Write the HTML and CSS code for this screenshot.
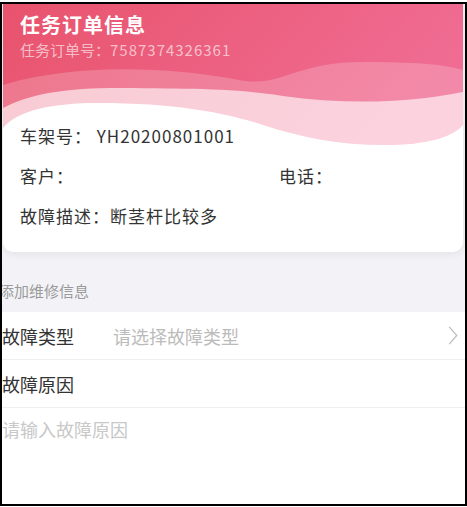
FILE: index.html
```html
<!DOCTYPE html>
<html lang="zh-CN">
<head>
<meta charset="UTF-8">
<meta name="viewport" content="width=device-width, initial-scale=1.0">
<title>任务订单信息</title>
<link rel="stylesheet" href="styles.css">
</head>
<body>
<div class="frame">
    <div class="card">
        <svg class="wave" viewBox="0 0 460 150" preserveAspectRatio="none">
            <defs>
                <linearGradient id="pink" x1="0" y1="0" x2="1" y2="0.3">
                    <stop offset="0" stop-color="#e8536c"/>
                    <stop offset="1" stop-color="#f06c93"/>
                </linearGradient>
            </defs>
            <rect width="460" height="150" fill="url(#pink)"/>
            <path d="M0,81 C70,60 160,62 236,76 C280,84 290,58 360,58 C410,58 440,60 460,66 V150 H0 Z" fill="rgba(255,255,255,0.2)"/>
            <path d="M0,104 C30,88 70,83 130,84 C190,85 230,84 280,92 C340,100 400,100 460,88 V150 H0 Z" fill="rgba(255,255,255,0.62)"/>
            <path d="M0,124 C15,106 50,99 95,99 C170,99 220,108 260,121 C300,134 340,142 390,141 C430,140 452,131 460,121 V150 H0 Z" fill="#fff"/>
        </svg>
        <div class="head">
            <h1 class="title">任务订单信息</h1>
            <p class="sub">任务订单号：<span class="num-sm">7587374326361</span></p>
        </div>
        <div class="info">
            <div class="row">车架号： <span class="num">YH20200801001</span></div>
            <div class="row split">
                <span>客户：</span>
                <span class="phone">电话：</span>
            </div>
            <div class="row">故障描述：断茎杆比较多</div>
        </div>
    </div>

    <div class="section">添加维修信息</div>

    <div class="field">
        <span class="label">故障类型</span>
        <span class="hint">请选择故障类型</span>
        <svg class="arrow" viewBox="0 0 10 20"><polyline points="1,1 9,10 1,19" fill="none" stroke="#bdbdbd" stroke-width="1.3"/></svg>
    </div>
    <div class="field">
        <span class="label">故障原因</span>
    </div>
    <div class="reason">请输入故障原因</div>
</div>
</body>
</html>
```

FILE: styles.css
```css
body {
    margin: 0;
    font-family: "Noto Sans CJK SC", "Noto Sans", sans-serif;
    background: #fff;
}

.frame {
    margin-top: 2px;
    height: 504px;
    box-sizing: border-box;
    border: 2px solid #000;
    overflow: hidden;
    background: #f3f3f7;
}

.card {
    position: relative;
    margin: 0 2px 0 1px;
    background: #fff;
    border-radius: 0 0 10px 10px;
    box-shadow: 0 2px 8px rgba(0, 0, 0, 0.07);
    overflow: hidden;
}

.wave {
    position: absolute;
    top: 0;
    left: 0;
    width: 100%;
    height: 150px;
}

.head, .info {
    position: relative;
}

.head {
    padding: 8px 0 0 17px;
}

.title {
    margin: 0;
    font-size: 20px;
    line-height: 26px;
    font-weight: bold;
    letter-spacing: 1px;
    color: #fff;
}

.sub {
    margin: 2px 0 0;
    font-size: 15px;
    line-height: 20px;
    color: rgba(255, 255, 255, 0.62);
}

.num-sm {
    letter-spacing: 1px;
}

.info {
    padding: 64px 17px 24px;
}

.row {
    font-size: 17px;
    line-height: 24px;
    letter-spacing: 1px;
    color: #333;
    margin-bottom: 16px;
}

.row:last-child {
    margin-bottom: 0;
}

.split {
    display: flex;
}

.phone {
    margin-left: 205px;
}

.section {
    padding: 29px 0 11px;
    text-indent: -3px;
    font-size: 15px;
    line-height: 20px;
    color: #9a9a9a;
}

.field {
    display: flex;
    align-items: center;
    height: 47px;
    background: #fff;
    border-bottom: 1px solid #eeeeee;
    font-size: 18px;
}

.label {
    width: 111px;
    color: #333;
}

.hint {
    flex: 1;
    color: #bbbbbb;
}

.arrow {
    width: 10px;
    height: 19px;
    margin-right: 7px;
}

.reason {
    height: 200px;
    background: #fff;
    padding: 10px 0 0;
    font-size: 18px;
    line-height: 22px;
    color: #c8c8c8;
}
```
